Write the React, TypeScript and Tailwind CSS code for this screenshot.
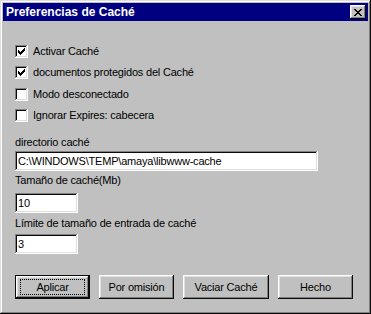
import React, { useState } from "react";

type Opcion = {
  id: string;
  label: string;
  checked: boolean;
};

const opcionesIniciales: Opcion[] = [
  { id: "activar", label: "Activar Caché", checked: true },
  { id: "protegidos", label: "documentos protegidos del Caché", checked: true },
  { id: "desconectado", label: "Modo desconectado", checked: false },
  { id: "expires", label: "Ignorar Expires: cabecera", checked: false },
];

const raised =
  "shadow-[inset_-1px_-1px_#0a0a0a,inset_1px_1px_#ffffff,inset_-2px_-2px_#808080,inset_2px_2px_#dfdfdf]";
const sunken =
  "shadow-[inset_-1px_-1px_#ffffff,inset_1px_1px_#808080,inset_-2px_-2px_#dfdfdf,inset_2px_2px_#0a0a0a]";

function Check() {
  // marca clásica de 7x7 pixeles
  const pix = [
    "......#",
    ".....##",
    "#...###",
    "##.###.",
    "#####..",
    ".###...",
    "..#....",
  ];
  return (
    <svg width="7" height="7" viewBox="0 0 7 7" shapeRendering="crispEdges">
      {pix.map((row, y) =>
        row.split("").map((c, x) =>
          c === "#" ? <rect key={`${x}-${y}`} x={x} y={y} width="1" height="1" fill="#000" /> : null
        )
      )}
    </svg>
  );
}

function CloseGlyph() {
  const pix = [
    "##....##",
    ".##..##.",
    "..####..",
    "...##...",
    "..####..",
    ".##..##.",
    "##....##",
  ];
  return (
    <svg width="8" height="7" viewBox="0 0 8 7" shapeRendering="crispEdges">
      {pix.map((row, y) =>
        row.split("").map((c, x) =>
          c === "#" ? <rect key={`${x}-${y}`} x={x} y={y} width="1" height="1" fill="#000" /> : null
        )
      )}
    </svg>
  );
}

function Casilla({ op, onToggle, className }: { op: Opcion; onToggle: () => void; className: string }) {
  return (
    <div className={`flex items-center h-[13px] ${className}`} onClick={onToggle}>
      <div className={`w-[13px] h-[13px] bg-white flex items-center justify-center ${sunken}`}>
        {op.checked ? <Check /> : null}
      </div>
      <span className="ml-[5px] leading-[13px]">{op.label}</span>
    </div>
  );
}

function Campo({ value, width, className }: { value: string; width: string; className: string }) {
  return (
    <div className={`h-[20px] bg-white flex items-center px-[3px] ${sunken} ${width} ${className}`}>
      <span className="leading-[13px] whitespace-nowrap">{value}</span>
    </div>
  );
}

export default function App() {
  const [opciones, setOpciones] = useState<Opcion[]>(opcionesIniciales);

  const toggle = (id: string) => {
    setOpciones(opciones.map((o) => (o.id === id ? { ...o, checked: !o.checked } : o)));
  };

  const margenes = ["mt-[24px]", "mt-[8px]", "mt-[9px]", "mt-[8px]"];

  return (
    <div
      className="w-[371px] h-[314px] bg-[#c0c0c0] p-[3px] text-black text-[11px] tracking-[-0.2px] shadow-[inset_-1px_-1px_#0a0a0a,inset_1px_1px_#dfdfdf,inset_-2px_-2px_#808080,inset_2px_2px_#ffffff]"
      style={{ fontFamily: '"Liberation Sans", Arial, sans-serif' }}
    >
      <div className="h-[18px] bg-[#000080] flex items-center justify-between pl-[3px] pr-[2px]">
        <span className="text-white font-bold text-[12px] tracking-normal leading-[14px]">
          Preferencias de Caché
        </span>
        <div className={`w-[16px] h-[14px] bg-[#c0c0c0] flex items-center justify-center ${raised}`}>
          <CloseGlyph />
        </div>
      </div>

      <div className="flex flex-col px-[12px]">
        {opciones.map((op, i) => (
          <Casilla key={op.id} op={op} onToggle={() => toggle(op.id)} className={margenes[i]} />
        ))}

        <span className="mt-[14px] h-[13px] leading-[13px]">directorio caché</span>
        <Campo value="C:\WINDOWS\TEMP\amaya\libwww-cache" width="w-[303px]" className="mt-[2px]" />

        <span className="mt-[3px] h-[13px] leading-[13px]">Tamaño de caché(Mb)</span>
        <Campo value="10" width="w-[63px]" className="mt-[6px]" />

        <span className="mt-[4px] h-[13px] leading-[13px]">Límite de tamaño de entrada de caché</span>
        <Campo value="3" width="w-[63px]" className="mt-[4px]" />

        <div className="flex gap-[9px] mt-[21px]">
          <button className="w-[75px] h-[24px] bg-[#c0c0c0] flex items-center justify-center shadow-[inset_-2px_-2px_#0a0a0a,inset_1px_1px_#0a0a0a,inset_2px_2px_#ffffff,inset_-3px_-3px_#808080,inset_3px_3px_#dfdfdf]">
            <span className="w-[65px] h-[16px] flex items-center justify-center border border-dotted border-black leading-[13px]">
              Aplicar
            </span>
          </button>
          <button className={`w-[75px] h-[24px] bg-[#c0c0c0] flex items-center justify-center ${raised}`}>
            Por omisión
          </button>
          <button className={`w-[86px] h-[24px] bg-[#c0c0c0] flex items-center justify-center ${raised}`}>
            Vaciar Caché
          </button>
          <button className={`w-[75px] h-[24px] bg-[#c0c0c0] flex items-center justify-center ${raised}`}>
            Hecho
          </button>
        </div>
      </div>
    </div>
  );
}
